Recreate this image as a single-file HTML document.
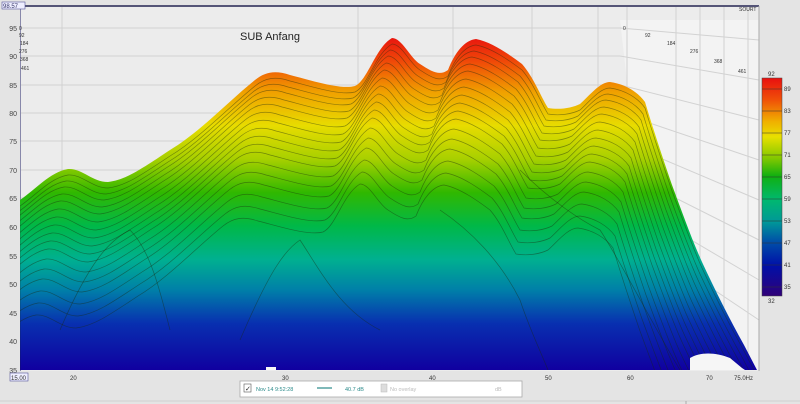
<!DOCTYPE html>
<html><head><meta charset="utf-8"><style>
html,body{margin:0;padding:0;background:#e4e4e4;width:800px;height:404px;overflow:hidden;}
svg{display:block;font-family:"Liberation Sans",sans-serif;}
</style></head><body>
<svg width="800" height="404" viewBox="0 0 800 404" xmlns="http://www.w3.org/2000/svg">
<defs>
<linearGradient id="g" x1="0" y1="0" x2="0" y2="1" gradientUnits="userSpaceOnUse" gradientTransform="translate(0,35) scale(1,335)">
<stop offset="0" stop-color="#e81010"/>
<stop offset="0.08" stop-color="#f04a08"/>
<stop offset="0.17" stop-color="#f0a000"/>
<stop offset="0.27" stop-color="#e8dc00"/>
<stop offset="0.37" stop-color="#a8d000"/>
<stop offset="0.47" stop-color="#30b800"/>
<stop offset="0.57" stop-color="#00b848"/>
<stop offset="0.67" stop-color="#00b090"/>
<stop offset="0.76" stop-color="#0080a8"/>
<stop offset="0.86" stop-color="#0830b0"/>
<stop offset="1" stop-color="#1000a0"/>
</linearGradient>
<linearGradient id="cb" x1="0" y1="0" x2="0" y2="1">
<stop offset="0" stop-color="#e81010"/>
<stop offset="0.1" stop-color="#f05008"/>
<stop offset="0.2" stop-color="#f0b000"/>
<stop offset="0.27" stop-color="#e8e000"/>
<stop offset="0.37" stop-color="#80c800"/>
<stop offset="0.45" stop-color="#10b010"/>
<stop offset="0.56" stop-color="#00b870"/>
<stop offset="0.66" stop-color="#009898"/>
<stop offset="0.75" stop-color="#0050a8"/>
<stop offset="0.86" stop-color="#0010a8"/>
<stop offset="1" stop-color="#300078"/>
</linearGradient>
<path id="m" d="M20,200 C35,190 50,172 68,169 C82,168 92,182 108,182 C125,180 140,170 170,150 C200,132 230,100 255,80 C265,72 275,70 290,75 C310,80 340,90 355,86 C368,80 375,48 392,38 C402,38 410,58 420,64 C432,72 440,76 448,70 C455,52 465,40 476,39 C492,42 510,55 522,64 C534,78 540,95 548,108 C560,110 572,108 580,104 C590,95 600,82 610,82 C625,84 638,92 645,102 C652,125 660,150 672,185 C682,212 692,240 702,262 C715,290 730,320 744,345 L757,370 L20,370 Z"/>
<clipPath id="c"><use href="#m"/></clipPath>
</defs>
<rect x="0" y="0" width="800" height="404" fill="#e4e4e4"/>
<rect x="20" y="6" width="739" height="365" fill="#ececec"/>
<polygon points="620,20 759,20 759,370 660,370" fill="#f3f3f3"/>
<g stroke="#d2d2d2" stroke-width="1">
<line x1="20" y1="28" x2="620" y2="28"/><line x1="20" y1="56" x2="620" y2="56"/><line x1="20" y1="85" x2="620" y2="85"/>
<line x1="20" y1="113" x2="620" y2="113"/><line x1="20" y1="141" x2="620" y2="141"/><line x1="20" y1="170" x2="620" y2="170"/>
<line x1="20" y1="198" x2="620" y2="198"/>
<line x1="62" y1="6" x2="62" y2="370"/><line x1="358" y1="6" x2="358" y2="370"/><line x1="453" y1="6" x2="453" y2="370"/><line x1="532" y1="6" x2="532" y2="370"/><line x1="598" y1="6" x2="598" y2="370"/>
<line x1="627" y1="6" x2="627" y2="370"/><line x1="676" y1="6" x2="676" y2="370"/><line x1="700" y1="6" x2="700" y2="370"/><line x1="724" y1="6" x2="724" y2="370"/><line x1="748" y1="6" x2="748" y2="370"/>
<line x1="620" y1="28" x2="759" y2="40"/><line x1="620" y1="56" x2="759" y2="80"/><line x1="620" y1="85" x2="759" y2="120"/><line x1="620" y1="113" x2="759" y2="160"/><line x1="620" y1="141" x2="759" y2="200"/><line x1="620" y1="170" x2="759" y2="240"/><line x1="620" y1="198" x2="759" y2="280"/><line x1="620" y1="227" x2="759" y2="320"/>
</g>
<rect x="20" y="5" width="739" height="2" fill="#555577"/>
<line x1="20.5" y1="6" x2="20.5" y2="371" stroke="#8888aa" stroke-width="1"/>
<line x1="759" y1="6" x2="759" y2="371" stroke="#aaaaaa"/>
<use href="#m" fill="url(#g)"/>
<g clip-path="url(#c)" fill="none" stroke="#1a2a10" stroke-opacity="0.45" stroke-width="0.7">
<use href="#m" transform="translate(0,6)"/><use href="#m" transform="translate(-2,12)"/><use href="#m" transform="translate(-4,18)"/><use href="#m" transform="translate(-6,25)"/><use href="#m" transform="translate(-8,32)"/><use href="#m" transform="translate(-10,40)"/><use href="#m" transform="translate(-12,48)"/><use href="#m" transform="translate(-14,56)"/><use href="#m" transform="translate(-16,64)"/><use href="#m" transform="translate(-18,72)"/><use href="#m" transform="translate(-20,80)"/><use href="#m" transform="translate(-22,90)"/><use href="#m" transform="translate(-24,100)"/><use href="#m" transform="translate(-26,110)"/><use href="#m" transform="translate(-28,122)"/><use href="#m" transform="translate(-30,134)"/><use href="#m" transform="translate(-32,146)"/>
<path d="M60,330 C90,260 110,240 130,230 C150,250 160,290 170,330"/>
<path d="M240,340 C270,270 285,250 300,240 C320,270 340,310 380,330"/>
<path d="M440,210 C470,230 500,260 520,300 C530,330 540,350 548,370"/>
<path d="M520,170 C550,200 580,220 600,230 C620,260 650,320 680,370"/>
</g>
<path d="M690,370 L690,358 C700,352 715,352 730,358 L742,368 L745,370 Z" fill="#f6f6f6"/>
<rect x="266" y="367" width="10" height="3" fill="#f6f6f6"/>
<text x="240" y="40" font-size="11" fill="#222">SUB Anfang</text>
<g font-size="7" fill="#444" text-anchor="end">
<text x="17" y="31">95</text><text x="17" y="59">90</text><text x="17" y="88">85</text><text x="17" y="116">80</text><text x="17" y="144">75</text><text x="17" y="173">70</text><text x="17" y="201">65</text><text x="17" y="230">60</text><text x="17" y="259">55</text><text x="17" y="287">50</text><text x="17" y="316">45</text><text x="17" y="344">40</text><text x="17" y="373">35</text>
</g>
<rect x="2" y="2" width="23" height="7" fill="#eef" stroke="#559" stroke-width="0.6"/>
<text x="3" y="8" font-size="6" fill="#336">98.57</text>
<g font-size="5" fill="#333">
<text x="19" y="30">0</text><text x="19" y="37">92</text><text x="20" y="45">184</text><text x="19" y="53">276</text><text x="20" y="61">368</text><text x="21" y="70">461</text>
<text x="623" y="30">0</text><text x="645" y="37">92</text><text x="667" y="45">184</text><text x="690" y="53">276</text><text x="714" y="63">368</text><text x="738" y="73">461</text>
<text x="739" y="11">SOURT</text>
</g>
<rect x="762" y="78" width="20" height="218" fill="url(#cb)" stroke="#444" stroke-width="0.5"/>
<g stroke="#333" stroke-width="0.5">
<line x1="762" y1="89" x2="782" y2="89"/><line x1="762" y1="111" x2="782" y2="111"/><line x1="762" y1="133" x2="782" y2="133"/><line x1="762" y1="155" x2="782" y2="155"/><line x1="762" y1="177" x2="782" y2="177"/><line x1="762" y1="199" x2="782" y2="199"/><line x1="762" y1="221" x2="782" y2="221"/><line x1="762" y1="243" x2="782" y2="243"/><line x1="762" y1="265" x2="782" y2="265"/><line x1="762" y1="287" x2="782" y2="287"/>
</g>
<g font-size="6" fill="#333">
<text x="768" y="76">92</text><text x="784" y="91">89</text><text x="784" y="113">83</text><text x="784" y="135">77</text><text x="784" y="157">71</text><text x="784" y="179">65</text><text x="784" y="201">59</text><text x="784" y="223">53</text><text x="784" y="245">47</text><text x="784" y="267">41</text><text x="784" y="289">35</text><text x="768" y="303">32</text>
</g>
<rect x="10" y="373" width="18" height="8" fill="#eef" stroke="#559" stroke-width="0.6"/>
<g font-size="6" fill="#333">
<text x="11" y="380">15.00</text>
<text x="70" y="380">20</text><text x="282" y="380">30</text><text x="429" y="380">40</text><text x="545" y="380">50</text><text x="627" y="380">60</text><text x="706" y="380">70</text><text x="734" y="380">75.0Hz</text>
</g>
<rect x="240" y="381" width="282" height="16" fill="#fff" stroke="#aaa" stroke-width="0.8"/>
<rect x="244" y="384" width="7" height="8" fill="#fff" stroke="#555" stroke-width="0.6"/>
<text x="245" y="391" font-size="7" fill="#222">✓</text>
<text x="256" y="391" font-size="5.5" fill="#2a8a8a">Nov 14 9:52:28</text>
<line x1="317" y1="388" x2="332" y2="388" stroke="#2a8a8a" stroke-width="1.2"/>
<text x="345" y="391" font-size="5.5" fill="#2a8a8a">40.7 dB</text>
<rect x="381" y="384" width="6" height="8" fill="#ddd" stroke="#bbb" stroke-width="0.5"/>
<text x="390" y="391" font-size="5.5" fill="#bbb">No overlay</text>
<text x="495" y="391" font-size="5.5" fill="#bbb">dB</text>
<line x1="0" y1="401" x2="800" y2="401" stroke="#cfcfcf"/>
<line x1="686" y1="401" x2="686" y2="404" stroke="#aaa"/>
</svg>
</body></html>
